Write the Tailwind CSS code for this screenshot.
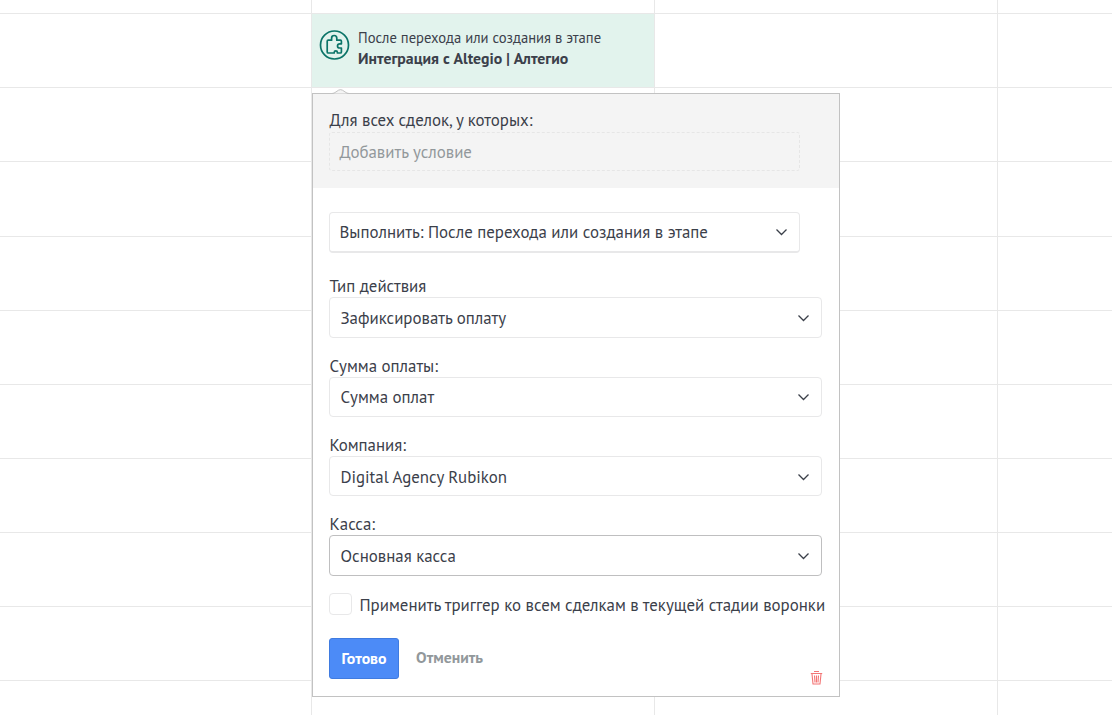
<!DOCTYPE html>
<html lang="ru">
<head>
  <meta charset="UTF-8">
  <meta name="viewport" content="width=device-width, initial-scale=1.0">
  <title>Триггеры воронки</title>
  <script src="https://cdn.jsdelivr.net/npm/@tailwindcss/browser@4"></script>
</head>
<body class="relative h-screen overflow-hidden bg-white font-['PT_Sans','Noto_Sans',sans-serif] text-[#3b404a]">

  <!-- Pipeline grid -->
  <div id="grid" class="grid h-screen w-full grid-cols-[312px_343px_343px_1fr] grid-rows-[14px_74px_74px_75px_74px_74px_74px_74px_74px_74px_1fr] overflow-hidden"></div>

  <!-- Trigger card -->
  <div class="absolute left-[312px] top-[14px] flex h-[73px] w-[342px] gap-2 bg-[#e2f3ed] pl-[7px] pt-4">
    <svg class="size-[31px] shrink-0" viewBox="0 0 31 31" fill="none" stroke="#0b7468" stroke-linejoin="round">
      <circle cx="15.5" cy="15" r="14" stroke-width="1.7"/>
      <path stroke-width="1.7" d="M8.200 22V11.200q0-1 1-1h3.400V8.200q0-2.700 2.600-2.700t2.600 2.700v2h3.600q1 0 1 1v2.600h-1.600q-2.300 0-2.300 2.100t2.300 2.100h1.600v4q0 1-1 1h-3v-.6q0-1.600-1.600-1.600t-1.600 1.600v.6H9.200q-1 0-1-1z"/>
    </svg>
    <div class="-mt-[3px] whitespace-nowrap leading-[21px]">
      <div class="text-[14.65px]">После перехода или создания в этапе</div>
      <div class="text-[15.75px] font-bold">Интеграция с Altegio | Алтегио</div>
    </div>
  </div>

  <!-- Trigger settings popup -->
  <div class="absolute left-[312px] top-[93px] h-[604px] w-[528px] border border-[#c2c2c2] bg-white text-[16.88px] leading-5">
    <svg class="absolute -top-[5px] left-[18px]" width="20" height="6" viewBox="0 0 20 6">
      <path fill="#f4f4f4" stroke="#c2c2c2" d="M1 4.500Q3 4.500 5 2.900L7.500 1.200Q9.500 .1 11.500 1.200L14 2.900Q16 4.500 18 4.500"/>
      <path stroke="#f4f4f4" d="M3 5.500H17"/>
    </svg>

    <div class="h-[94px] bg-[#f4f4f4] pl-4 pt-4">
      <div class="pl-[0.5px]">Для всех сделок, у которых:</div>
      <div class="mt-[2px] flex h-[39px] w-[471px] items-center rounded-[3px] border border-dashed border-[#e6e6e6] pl-[9.5px] text-[#92989b]">Добавить условие</div>
    </div>

    <div class="pl-4 pt-6">
      <div class="flex h-[41px] w-[471px] items-center justify-between rounded-[4px] border border-b-2 border-[#e8e8e9] pl-[9.5px] pr-[11px]">
        <span>Выполнить: После перехода или создания в этапе</span>
        <svg width="13" height="8" viewBox="0 0 13 8" fill="none" stroke="#3b404a" stroke-width="1.3"><path d="M1.500 1.500l5 5 5-5"/></svg>
      </div>

      <div class="mt-[23px] pl-[0.5px]">Тип действия</div>
      <div class="mt-px flex h-[41px] w-[493px] items-center justify-between rounded-[4px] border border-[#e8e8e9] pl-[10.5px] pr-[11px]">
        <span>Зафиксировать оплату</span>
        <svg width="13" height="8" viewBox="0 0 13 8" fill="none" stroke="#3b404a" stroke-width="1.3"><path d="M1.500 1.500l5 5 5-5"/></svg>
      </div>

      <div class="mt-[18px] pl-[0.5px]">Сумма оплаты:</div>
      <div class="mt-px flex h-10 w-[493px] items-center justify-between rounded-[4px] border border-[#e8e8e9] pl-[10.5px] pr-[11px]">
        <span>Сумма оплат</span>
        <svg width="13" height="8" viewBox="0 0 13 8" fill="none" stroke="#3b404a" stroke-width="1.3"><path d="M1.500 1.500l5 5 5-5"/></svg>
      </div>

      <div class="mt-[18px] pl-[0.5px]">Компания:</div>
      <div class="mt-px flex h-10 w-[493px] items-center justify-between rounded-[4px] border border-[#e8e8e9] pl-[10.5px] pr-[11px] pt-[2px]">
        <span>Digital Agency Rubikon</span>
        <svg width="13" height="8" viewBox="0 0 13 8" fill="none" stroke="#3b404a" stroke-width="1.3"><path d="M1.500 1.500l5 5 5-5"/></svg>
      </div>

      <div class="mt-[18px] pl-[0.5px]">Касса:</div>
      <div class="mt-px flex h-[41px] w-[493px] items-center justify-between rounded-[4px] border border-[#bfbfc0] pl-[10.5px] pr-[11px]">
        <span>Основная касса</span>
        <svg width="13" height="8" viewBox="0 0 13 8" fill="none" stroke="#3b404a" stroke-width="1.3"><path d="M1.500 1.500l5 5 5-5"/></svg>
      </div>

      <label class="mt-[17px] flex h-[22px] items-center gap-[7.5px] whitespace-nowrap">
        <span class="h-[22px] w-[23px] rounded-[4px] border border-[#e8e8e9]"></span>
        <span class="pt-[2px]">Применить триггер ко всем сделкам в текущей стадии воронки</span>
      </label>

      <div class="mt-[23px] flex items-center gap-[17px] text-[15.75px] font-bold">
        <button class="h-[41px] w-[70px] rounded-[3px] border border-[#3f7be0] bg-[#4c8bf7] pb-[2px] text-white">Готово</button>
        <button class="pb-1 text-[#92989b]">Отменить</button>
      </div>
    </div>

    <svg class="absolute bottom-[10px] right-[16px]" width="13" height="16" viewBox="0 0 13 16" fill="none" stroke="#f37575" stroke-width="1.1">
      <path d="M.8 3.500h11.400M4 1.500h5M2 4l1 10h7l1-10M4.500 5.500l.5 7M6.500 5.500v7M8.500 5.500l-.5 7"/>
    </svg>
  </div>

<script>
  // 11 rows of 4 stage columns
  const grid = document.getElementById('grid');
  for (let i = 0; i < 44; i++) {
    const cell = document.createElement('div');
    const lastCol = i % 4 === 3;
    const lastRow = i >= 40;
    cell.className = 'border-[#e8e8e8]';
    if (!lastCol) cell.classList.add('border-r');
    if (!lastRow) cell.classList.add('border-b');
    grid.appendChild(cell);
  }
</script>
</body>
</html>
